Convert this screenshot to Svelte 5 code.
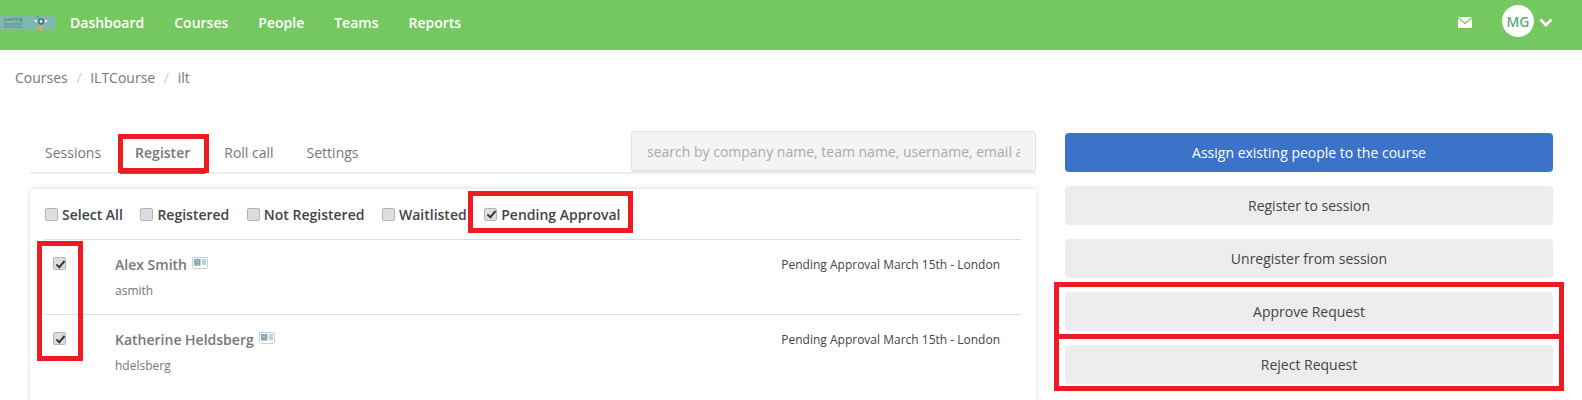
<script>
	const navItems = ['Dashboard', 'Courses', 'People', 'Teams', 'Reports'];
	const tabs = ['Sessions', 'Register', 'Roll call', 'Settings'];
	const filters = [
		{ label: 'Select All', checked: false },
		{ label: 'Registered', checked: false },
		{ label: 'Not Registered', checked: false },
		{ label: 'Waitlisted', checked: false },
		{ label: 'Pending Approval', checked: true }
	];
	const people = [
		{ name: 'Alex Smith', username: 'asmith' },
		{ name: 'Katherine Heldsberg', username: 'hdelsberg' }
	];
	const actions = ['Register to session', 'Unregister from session', 'Approve Request', 'Reject Request'];
</script>

<div class="page">
	<header class="navbar">
		<div class="logo">
			<svg width="55" height="15" viewBox="0 0 55 15">
				<rect width="55" height="15" fill="#7db9ac" />
				<text x="4" y="5.5" font-size="4.6" fill="#566c6e" font-family="Open Sans, sans-serif">Learning</text>
				<text x="4" y="9.5" font-size="2.9" fill="#566c6e" font-family="Open Sans, sans-serif">Management</text>
				<text x="4" y="12.5" font-size="2.9" fill="#566c6e" font-family="Open Sans, sans-serif">System Guide</text>
				<circle cx="41" cy="6.5" r="3.2" fill="#2f7f86" />
				<circle cx="41" cy="6.5" r="1.4" fill="#e4f2ee" />
				<circle cx="36" cy="6" r="1.3" fill="#f0ead2" />
				<circle cx="46" cy="6" r="1.3" fill="#f0ead2" />
				<circle cx="37.5" cy="2" r="1.1" fill="#5e9c78" />
				<circle cx="44.5" cy="2" r="1.1" fill="#d89a70" />
				<rect x="39" y="10.5" width="4" height="4.5" fill="#e8a04f" />
			</svg>
		</div>
		<nav class="nav-links">
			{#each navItems as item}
				<a href="#top">{item}</a>
			{/each}
		</nav>
		<div class="nav-right">
			<svg class="mail" width="14" height="11" viewBox="0 0 14 11">
				<path d="M0 0h14L7 5.6z" fill="#fff" />
				<path d="M0 1.6V11h14V1.6L7 7.2z" fill="#fff" />
			</svg>
			<span class="avatar">MG</span>
			<svg class="chevron" width="14" height="9" viewBox="0 0 14 9">
				<path d="M1.5 1.5 7 7l5.5-5.5" fill="none" stroke="#fff" stroke-width="2.8" />
			</svg>
		</div>
	</header>

	<div class="breadcrumb">
		<a href="#top">Courses</a>
		<span class="sep">/</span>
		<a href="#top">ILTCourse</a>
		<span class="sep">/</span>
		<span>ilt</span>
	</div>

	<main class="content">
		<section class="left">
			<div class="tabs-row">
				<div class="tabs">
					{#each tabs as tab}
						<a href="#top" class="tab" class:active={tab === 'Register'}>{tab}</a>
					{/each}
				</div>
				<input class="search" type="text" placeholder="search by company name, team name, username, email address" />
			</div>

			<div class="card">
				<div class="filters">
					{#each filters as filter}
						<label class="filter">
							<input type="checkbox" checked={filter.checked} />
							{filter.label}
						</label>
					{/each}
				</div>
				{#each people as person}
					<div class="person">
						<input type="checkbox" checked />
						<div class="person-info">
							<div class="person-name">
								{person.name}
								<svg width="16" height="12" viewBox="0 0 16 12">
									<path d="M.5.5h15v9.5l-1 1.5H1.5l-1-1.5z" fill="#fff" stroke="#c5d0d8" />
									<rect x="2" y="2" width="6.5" height="6.5" fill="#62aef0" />
									<circle cx="5.2" cy="4.2" r="1.5" fill="#e0a878" />
									<path d="M3 8.5c0-2 4.4-2 4.4 0z" fill="#e8a04f" />
									<path d="M10 3h4M10 5h4M10 7h4" stroke="#8f9aa3" />
								</svg>
							</div>
							<div class="username">{person.username}</div>
						</div>
						<div class="status">Pending Approval March 15th - London</div>
					</div>
				{/each}
			</div>
		</section>

		<aside class="right">
			<button class="btn primary">Assign existing people to the course</button>
			{#each actions as action}
				<button class="btn">{action}</button>
			{/each}
		</aside>
	</main>

	<!-- red annotations drawn over the screenshot -->
	<div class="mark mark-tab"></div>
	<div class="mark mark-filter"></div>
	<div class="mark mark-rows"></div>
	<div class="mark mark-approve"></div>
	<div class="mark mark-reject"></div>
</div>

<style>
	:global(body) {
		margin: 0;
		background: #fff;
	}

	.page {
		position: relative;
		height: 400px;
		overflow: hidden;
		font-family: 'Open Sans', sans-serif;
		font-size: 14px;
		color: #777;
	}

	a {
		color: inherit;
		text-decoration: none;
	}

	.navbar {
		display: flex;
		align-items: flex-start;
		height: 50px;
		background: #75c75f;
	}

	.logo {
		display: flex;
		margin-top: 15px;
	}

	.nav-links {
		display: flex;
	}

	.nav-links a {
		padding: 0 15px;
		line-height: 46px;
		font-weight: 600;
		color: #fff;
	}

	.nav-right {
		display: flex;
		align-items: center;
		margin-left: auto;
		padding: 5px 29px 0 0;
	}

	.mail {
		margin-right: 30px;
		margin-top: 2px;
	}

	.avatar {
		display: flex;
		align-items: center;
		justify-content: center;
		width: 32px;
		height: 32px;
		border-radius: 50%;
		background: #fff;
		color: #6aa583;
		font-size: 14px;
		font-weight: 600;
	}

	.chevron {
		margin-left: 5px;
		margin-top: 2px;
	}

	.breadcrumb {
		height: 63px;
		padding: 18px 0 0 15px;
		line-height: 20px;
		color: #777;
	}

	.breadcrumb .sep {
		padding: 0 5px;
		color: #ccc;
	}

	.content {
		display: flex;
		padding-left: 30px;
		gap: 29px;
	}

	.left {
		width: 1006px;
		flex: none;
	}

	.tabs-row {
		display: flex;
		justify-content: space-between;
		height: 41px;
		border-bottom: 2px solid #eee;
	}

	.tabs {
		display: flex;
		gap: 4px;
	}

	.tab {
		height: 43px;
		padding: 0 15px;
		line-height: 44px;
		box-sizing: border-box;
	}

	.tab.active {
		font-weight: 600;
		border-bottom: 2px solid #3b73c8;
	}

	.tab:last-child {
		margin-left: -1px;
	}

	.search {
		width: 405px;
		height: 41px;
		box-sizing: border-box;
		padding: 0 15px;
		border: 1px solid #e3e3e3;
		border-bottom-width: 2px;
		border-radius: 4px;
		background: #f4f4f4;
		font: inherit;
		outline: none;
	}

	.search::placeholder {
		color: #aaa;
	}

	.card {
		margin-top: 15px;
		height: 300px;
		padding: 0 15px;
		border-radius: 4px;
		background: #fff;
		box-shadow: 0 0 6px rgba(0, 0, 0, 0.15);
	}

	.filters {
		display: flex;
		align-items: center;
		height: 51px;
		gap: 17.5px;
		color: #444;
		font-weight: 600;
		border-bottom: 1px solid #ddd;
		box-sizing: border-box;
	}

	.filter {
		display: flex;
		align-items: center;
		gap: 4px;
	}

	input[type='checkbox'] {
		appearance: none;
		position: relative;
		flex: none;
		width: 13px;
		height: 13px;
		margin: 0;
		border: 1px solid #b4b4b4;
		border-radius: 2px;
		background: #dedede;
	}

	input[type='checkbox']:checked::after {
		content: '';
		position: absolute;
		left: 3.5px;
		top: 0.5px;
		width: 3px;
		height: 7px;
		border: solid #3a3a3a;
		border-width: 0 2px 2px 0;
		transform: rotate(40deg);
	}

	.person {
		display: flex;
		height: 75px;
		box-sizing: border-box;
		padding: 17px 21px 0 8px;
		border-bottom: 1px solid #ddd;
	}

	.person:last-child {
		border-bottom: none;
	}

	.person-info {
		margin-left: 49px;
	}

	.person-name {
		display: flex;
		gap: 5px;
		line-height: 16px;
		font-weight: 600;
	}

	.username {
		margin-top: 10px;
		line-height: 16px;
		font-size: 12px;
	}

	.status {
		margin-left: auto;
		line-height: 16px;
		font-size: 12px;
		color: #444;
	}

	.right {
		display: flex;
		flex-direction: column;
		flex: none;
		width: 488px;
		gap: 14px;
		padding-top: 2px;
	}

	.btn {
		height: 39px;
		border: none;
		border-radius: 4px;
		background: #ededed;
		color: #444;
		font: inherit;
	}

	.btn.primary {
		background: #3b73c8;
		color: #fff;
		font-weight: 500;
	}

	.mark {
		position: absolute;
		box-sizing: border-box;
		border: 5px solid #ed1c24;
	}

	.mark-tab {
		left: 118px;
		top: 134px;
		width: 91px;
		height: 39px;
	}

	.mark-filter {
		left: 468px;
		top: 191px;
		width: 165px;
		height: 42px;
	}

	.mark-rows {
		left: 37px;
		top: 241px;
		width: 46px;
		height: 120px;
	}

	.mark-approve {
		left: 1054px;
		top: 282px;
		width: 510px;
		height: 57px;
	}

	.mark-reject {
		left: 1054px;
		top: 334px;
		width: 510px;
		height: 57px;
	}
</style>
